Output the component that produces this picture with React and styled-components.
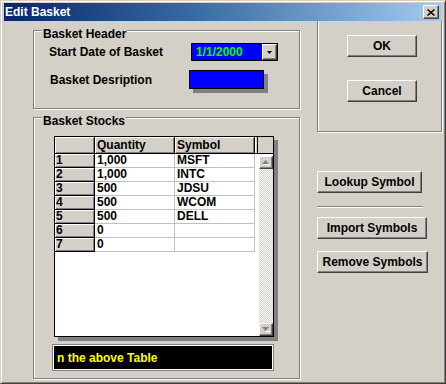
import React from 'react';
import styled, { createGlobalStyle, css } from 'styled-components';

const GlobalStyle = createGlobalStyle`
    html, body {
        margin: 0;
        padding: 0;
        background: #d4d0c8;
    }
    body {
        font-family: "Liberation Sans", Arial, sans-serif;
        font-size: 12px;
        font-weight: bold;
    }
    * {
        box-sizing: border-box;
    }
`;

const raised = css`
    background: #d4d0c8;
    border: 1px solid;
    border-color: #fff #404040 #404040 #fff;
    box-shadow: inset -1px -1px #808080, inset 1px 1px #d4d0c8;
`;

const etched = css`
    border: 1px solid #808080;
    box-shadow: inset 1px 1px #fff, 1px 1px #fff;
`;

const Window = styled.div`
    width: 446px;
    height: 384px;
    display: flex;
    flex-direction: column;
    background: #d4d0c8;
    border: 1px solid;
    border-color: #d4d0c8 #404040 #404040 #d4d0c8;
    box-shadow: inset 1px 1px #fff, inset -1px -1px #808080;
    padding: 2px 3px 2px 3px;
`;

const TitleBar = styled.div`
    height: 18px;
    flex: none;
    display: flex;
    align-items: center;
    justify-content: space-between;
    background: linear-gradient(to right, #0a246a 0%, #3a6ea5 45%, #a6caf0 100%);
    padding-left: 1px;
`;

const Title = styled.span`
    color: #fff;
    line-height: 18px;
`;

const CloseButton = styled.div`
    ${raised};
    width: 16px;
    height: 14px;
    margin-right: 3px;
    display: flex;
    align-items: center;
    justify-content: center;
`;

const Client = styled.div`
    flex: 1;
    display: flex;
    padding-left: 29px;
`;

const LeftColumn = styled.div`
    display: flex;
    flex-direction: column;
    width: 267px;
`;

const Group = styled.div`
    ${etched};
    display: flex;
    flex-direction: column;
    height: ${(p) => p.$height}px;
    margin-top: ${(p) => p.$mt}px;
`;

const Caption = styled.span`
    align-self: flex-start;
    background: #d4d0c8;
    line-height: 14px;
    margin: -4px 0 0 8px;
    padding: 0 1px;
    color: #000;
`;

const FieldRow = styled.div`
    display: flex;
    align-items: center;
    height: ${(p) => p.$h}px;
    margin-top: ${(p) => p.$mt}px;
    padding-left: ${(p) => p.$pl}px;
`;

const FieldLabel = styled.span`
    width: ${(p) => p.$w}px;
    color: #000;
`;

const Combo = styled.div`
    width: 87px;
    height: 18px;
    display: flex;
    align-items: stretch;
    border: 1px solid #000;
    background: #0000ff;
`;

const ComboText = styled.span`
    flex: 1;
    color: #00ff00;
    line-height: 16px;
    padding-left: 4px;
`;

const DropButton = styled.div`
    ${raised};
    width: 15px;
    display: flex;
    align-items: center;
    justify-content: center;
`;

const ColorBox = styled.div`
    width: 75px;
    height: 19px;
    border: 1px solid #000;
    background: #0000ff;
    box-shadow: 4px 4px 0 #808080;
`;

const Grid = styled.div`
    width: 220px;
    height: 201px;
    margin: 8px 0 0 20px;
    border: 1px solid #000;
    background: #fff;
    box-shadow: 4px 4px 0 #808080;
    display: flex;
    flex-direction: column;
`;

const GridHead = styled.div`
    display: flex;
    height: 17px;
    flex: none;
`;

const HeadCell = styled.div`
    width: ${(p) => p.$w}px;
    background: #d4d0c8;
    border-right: 1px solid #000;
    border-bottom: 1px solid #000;
    box-shadow: inset 1px 1px #fff, inset -1px -1px #808080;
    line-height: 16px;
    padding-left: 2px;
    color: #000;
`;

const Splitter = styled.div`
    width: 3px;
    background: #d4d0c8;
    border-right: 1px solid #000;
    border-bottom: 1px solid #000;
    box-shadow: inset 1px 0 #fff;
`;

const Corner = styled.div`
    flex: 1;
    background: #d4d0c8;
    border-bottom: 1px solid #000;
`;

const GridBody = styled.div`
    flex: 1;
    display: flex;
`;

const Rows = styled.div`
    width: 200px;
    display: flex;
    flex-direction: column;
`;

const Row = styled.div`
    display: flex;
    height: 14px;
`;

const RowHead = styled.div`
    width: 40px;
    background: #d4d0c8;
    border-right: 1px solid #000;
    border-bottom: 1px solid #000;
    box-shadow: inset 1px 1px #fff, inset -1px -1px #808080;
    line-height: 13px;
    padding-left: 1px;
    color: #000;
`;

const Cell = styled.div`
    width: 80px;
    border-right: 1px solid #c0c0c0;
    border-bottom: 1px solid #c0c0c0;
    line-height: 13px;
    padding-left: 2px;
    color: #000;
`;

const ScrollBar = styled.div`
    width: 14px;
    margin: 2px 0 0 4px;
    display: flex;
    flex-direction: column;
`;

const ScrollButton = styled.div`
    ${raised};
    height: 13px;
    flex: none;
    display: flex;
    align-items: center;
    justify-content: center;
`;

const Track = styled.div`
    flex: 1;
    background: repeating-conic-gradient(#d4d0c8 0 25%, #fff 0 50%) 0 0 / 2px 2px;
`;

const StatusBar = styled.div`
    width: 222px;
    height: 27px;
    margin: 7px 0 0 18px;
    border: 1px solid #808080;
    box-shadow: inset 0 0 0 1px #fff;
    background: #000;
    padding: 1px 4px;
    display: flex;
    align-items: center;
    color: #ffff00;
`;

const RightColumn = styled.div`
    display: flex;
    flex-direction: column;
    align-items: flex-start;
    margin-left: 17px;
`;

const Frame = styled.div`
    ${etched};
    border-top: none;
    box-shadow: inset 1px 0 #fff, 1px 1px #fff;
    width: 125px;
    height: 111px;
    padding-left: 29px;
    display: flex;
    flex-direction: column;
`;

const Button = styled.div`
    ${raised};
    width: ${(p) => p.$w}px;
    height: 22px;
    margin-top: ${(p) => p.$mt}px;
    display: flex;
    align-items: center;
    justify-content: center;
    color: #000;
`;

const Separator = styled.div`
    width: 106px;
    height: 2px;
    margin-top: 13px;
    border-top: 1px solid #808080;
    border-bottom: 1px solid #fff;
`;

const stocks = [
    { qty: '1,000', sym: 'MSFT' },
    { qty: '1,000', sym: 'INTC' },
    { qty: '500', sym: 'JDSU' },
    { qty: '500', sym: 'WCOM' },
    { qty: '500', sym: 'DELL' },
    { qty: '0', sym: '' },
    { qty: '0', sym: '' },
];

const App = () => (
    <>
        <GlobalStyle />
        <Window>
            <TitleBar>
                <Title>Edit Basket</Title>
                <CloseButton>
                    <svg width="8" height="7" viewBox="0 0 8 7">
                        <path d="M0.5 0.5L7.5 6.5M7.5 0.5L0.5 6.5" stroke="#000" strokeWidth="1.5" />
                    </svg>
                </CloseButton>
            </TitleBar>
            <Client>
                <LeftColumn>
                    <Group $height={79} $mt={9}>
                        <Caption>Basket Header</Caption>
                        <FieldRow $h={18} $mt={2} $pl={15}>
                            <FieldLabel $w={142}>Start Date of Basket</FieldLabel>
                            <Combo>
                                <ComboText>1/1/2000</ComboText>
                                <DropButton>
                                    <svg width="5" height="3" viewBox="0 0 5 3">
                                        <path d="M0 0h5L2.5 3z" fill="#000" />
                                    </svg>
                                </DropButton>
                            </Combo>
                        </FieldRow>
                        <FieldRow $h={19} $mt={9} $pl={16}>
                            <FieldLabel $w={139}>Basket Desription</FieldLabel>
                            <ColorBox />
                        </FieldRow>
                    </Group>
                    <Group $height={262} $mt={8}>
                        <Caption>Basket Stocks</Caption>
                        <Grid>
                            <GridHead>
                                <HeadCell $w={40} />
                                <HeadCell $w={80}>Quantity</HeadCell>
                                <HeadCell $w={80}>Symbol</HeadCell>
                                <Splitter />
                                <Corner />
                            </GridHead>
                            <GridBody>
                                <Rows>
                                    {stocks.map((s, i) => (
                                        <Row key={i}>
                                            <RowHead>{i + 1}</RowHead>
                                            <Cell>{s.qty}</Cell>
                                            <Cell>{s.sym}</Cell>
                                        </Row>
                                    ))}
                                </Rows>
                                <ScrollBar>
                                    <ScrollButton>
                                        <svg width="8" height="5" viewBox="0 0 8 5">
                                            <path d="M3.5 0L7 4H0z" fill="#808080" />
                                            <path d="M1 4.5h7" stroke="#fff" />
                                        </svg>
                                    </ScrollButton>
                                    <Track />
                                    <ScrollButton>
                                        <svg width="8" height="5" viewBox="0 0 8 5">
                                            <path d="M0 0h7L3.5 4z" fill="#808080" />
                                            <path d="M4 4.5h4" stroke="#fff" />
                                        </svg>
                                    </ScrollButton>
                                </ScrollBar>
                            </GridBody>
                        </Grid>
                        <StatusBar>n the above Table</StatusBar>
                    </Group>
                </LeftColumn>
                <RightColumn>
                    <Frame>
                        <Button $w={70} $mt={14}>OK</Button>
                        <Button $w={70} $mt={23}>Cancel</Button>
                    </Frame>
                    <Button $w={105} $mt={39}>Lookup Symbol</Button>
                    <Separator />
                    <Button $w={110} $mt={9}>Import Symbols</Button>
                    <Button $w={111} $mt={12}>Remove Symbols</Button>
                </RightColumn>
            </Client>
        </Window>
    </>
);

export default App;
